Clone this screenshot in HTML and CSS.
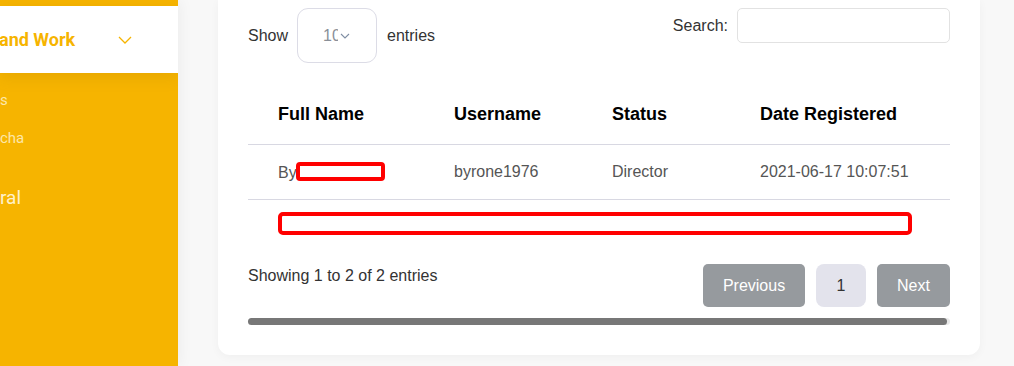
FILE: index.html
```html
<!DOCTYPE html>
<html>
<head>
<meta charset="utf-8">
<link rel="stylesheet" href="styles.css">
</head>
<body>
<div class="layout">
  <aside class="sidebar">
    <div class="side-top"></div>
    <div class="side-item active">
      <span class="side-label">and Work</span>
      <svg class="side-chev" width="14" height="8" viewBox="0 0 14 8"><path d="M1 1 L7 7 L13 1" fill="none" stroke="#f6b400" stroke-width="1.3"/></svg>
    </div>
    <div class="side-sub">
      <div class="sub-link">s</div>
      <div class="sub-link">cha</div>
    </div>
    <div class="side-section">ral</div>
  </aside>
  <main class="main">
    <section class="card">
      <div class="controls">
        <div class="length">
          <span>Show</span>
          <div class="select">
            <span class="select-val">10</span>
            <svg width="10" height="6" viewBox="0 0 10 6"><path d="M1 1 L5 5 L9 1" fill="none" stroke="#7f8ea3" stroke-width="1.1"/></svg>
          </div>
          <span>entries</span>
        </div>
        <div class="search">
          <label>Search:</label>
          <div class="search-input"></div>
        </div>
      </div>
      <table class="tbl">
        <colgroup>
          <col class="c1"><col class="c2"><col class="c3"><col class="c4">
        </colgroup>
        <thead>
          <tr><th>Full Name</th><th>Username</th><th>Status</th><th>Date Registered</th></tr>
        </thead>
        <tbody>
          <tr class="row1"><td>By<span class="redact-s"></span></td><td>byrone1976</td><td>Director</td><td>2021-06-17 10:07:51</td></tr>
          <tr class="row2"><td colspan="4"><div class="redact-l"></div></td></tr>
        </tbody>
      </table>
      <div class="footer">
        <div class="info">Showing 1 to 2 of 2 entries</div>
        <div class="pager">
          <span class="btn btn-grey prev">Previous</span>
          <span class="btn btn-page">1</span>
          <span class="btn btn-grey next">Next</span>
        </div>
      </div>
      <div class="scroll-track"><div class="scroll-thumb"></div></div>
    </section>
  </main>
</div>
</body>
</html>
```
FILE: styles.css
```css
* { box-sizing: border-box; }
html, body { margin: 0; padding: 0; }
body {
  width: 1014px;
  height: 366px;
  overflow: hidden;
  background: #f8f8f8;
  font-family: "Liberation Sans", Arial, sans-serif;
}
.layout {
  display: flex;
  height: 366px;
}
.sidebar {
  width: 178px;
  flex: 0 0 178px;
  background: #f6b400;
  font-family: Roboto, "Liberation Sans", sans-serif;
  overflow: hidden;
  box-shadow: 2px 0 14px rgba(0,0,0,0.05);
  position: relative;
  z-index: 1;
}
.side-top { height: 6px; }
.side-item {
  height: 67px;
  background: #fff;
  display: flex;
  align-items: center;
  box-shadow: 0 4px 14px rgba(160,110,0,0.18);
  position: relative;
}
.side-label {
  color: #f6b400;
  font-weight: 700;
  font-size: 18px;
  margin-left: -1px;
  width: 119px;
  padding-bottom: 1px;
}
.side-chev { margin-top: 1px; }
.side-sub {
  padding-top: 19px;
}
.sub-link {
  color: #fde7a9;
  font-size: 15px;
  height: 38px;
  line-height: 16px;
}
.side-section {
  color: #fff1cb;
  font-size: 19px;
  margin-top: 19px;
  line-height: 22px;
}
.main {
  flex: 1;
  padding-left: 40px;
  padding-right: 34px;
}
.card {
  width: 762px;
  height: 355px;
  background: #fff;
  border-radius: 0 0 12px 12px;
  box-shadow: 0 2px 10px rgba(0,0,0,0.04);
  padding: 8px 30px 0 30px;
  color: #333;
  font-size: 16px;
}
.controls {
  display: flex;
  justify-content: space-between;
  align-items: flex-start;
  height: 77px;
}
.length {
  display: flex;
  align-items: center;
  gap: 9px;
  height: 55px;
  color: #333;
}
.length span:last-child { margin-left: 1px; }
.select {
  width: 80px;
  height: 55px;
  border: 1px solid #dcdce6;
  border-radius: 11px;
  display: flex;
  align-items: center;
  padding-left: 25px;
  gap: 2px;
}
.select-val {
  display: inline-block;
  width: 15px;
  overflow: hidden;
  white-space: nowrap;
  color: #8a8f98;
  font-size: 16px;
}
.search {
  display: flex;
  align-items: center;
  gap: 9px;
  height: 35px;
}
.search label { color: #333; }
.search-input {
  width: 213px;
  height: 35px;
  border: 1px solid #e2e2e2;
  border-radius: 5px;
}
.tbl {
  width: 702px;
  border-collapse: collapse;
  table-layout: fixed;
}
.c1 { width: 176px; }
.c2 { width: 158px; }
.c3 { width: 148px; }
.c4 { width: 220px; }
.tbl th {
  text-align: left;
  font-weight: 700;
  font-size: 18px;
  color: #000;
  padding: 0 0 0 30px;
  height: 59px;
  border-bottom: 1px solid #d8d8e2;
}
.tbl td {
  padding: 0 0 0 30px;
  color: #555;
  white-space: nowrap;
}
.row1 td {
  height: 55px;
  border-bottom: 1px solid #d8d8e2;
}
.row2 td { height: 48px; }
.redact-s {
  display: inline-block;
  width: 89px;
  height: 19px;
  border: 4px solid #ff0000;
  border-radius: 4px;
  vertical-align: -3px;
  margin-left: -1px;
}
.redact-l {
  width: 634px;
  height: 23px;
  border: 4px solid #ff0000;
  border-radius: 5px;
}
.footer {
  display: flex;
  justify-content: space-between;
  align-items: flex-start;
  margin-top: 17px;
}
.info {
  color: #333;
  padding-top: 3px;
}
.pager {
  display: flex;
  gap: 11px;
}
.btn {
  height: 43px;
  display: flex;
  align-items: center;
  justify-content: center;
  border-radius: 5px;
  font-size: 16px;
}
.btn-grey { background: #969a9e; color: #fff; }
.prev { width: 102px; }
.next { width: 73px; }
.btn-page {
  width: 50px;
  background: #e3e3ec;
  color: #333;
  border-radius: 8px;
}
.scroll-track {
  margin-top: 11px;
  height: 7px;
  background: #e9e9e9;
  border-radius: 4px;
}
.scroll-thumb {
  width: 699px;
  height: 7px;
  background: #777;
  border-radius: 4px;
}
```
